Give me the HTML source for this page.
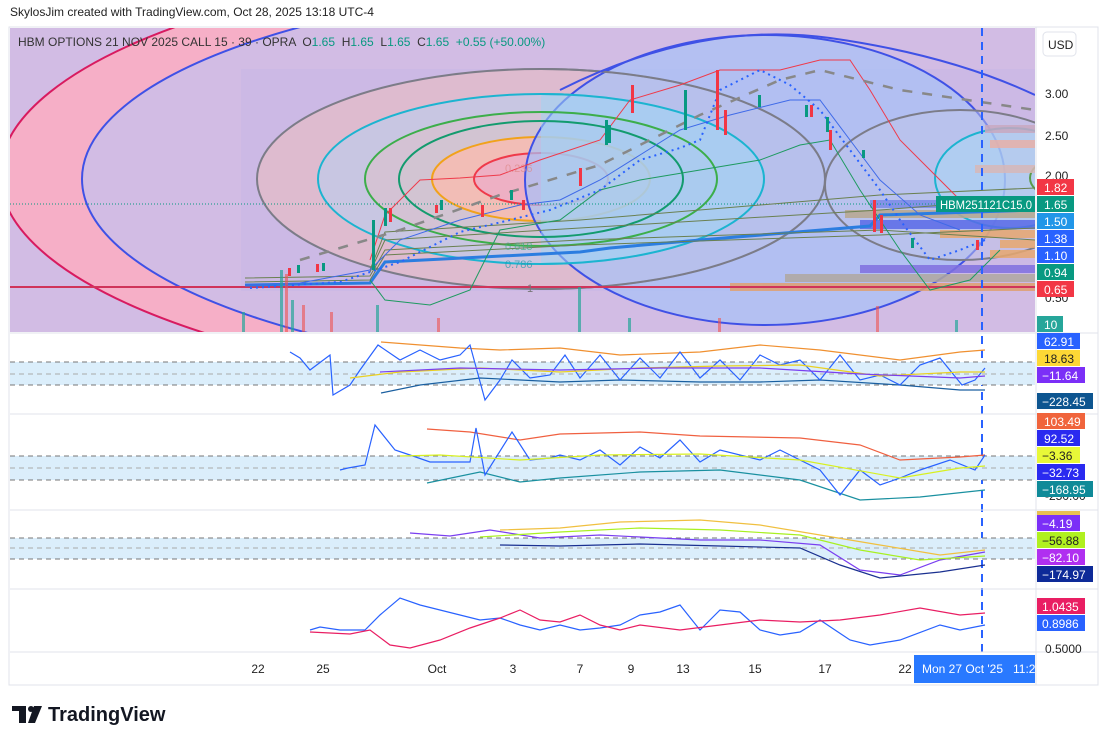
<!DOCTYPE html>
<html><head><meta charset="utf-8"><style>
body{margin:0;background:#fff;width:1108px;height:743px;overflow:hidden;font-family:"Liberation Sans",sans-serif;}
.t{position:absolute;}
</style></head><body>
<div class="t" style="left:10px;top:5px;font-size:12px;color:#222">SkylosJim created with TradingView.com, Oct 28, 2025 13:18 UTC-4</div>
<svg width="1108" height="743" style="position:absolute;left:0;top:0" font-family="Liberation Sans, sans-serif">
<defs><clipPath id="mc"><rect x="10" y="28" width="1025" height="304"/></clipPath></defs>
<rect x="9" y="27" width="1089" height="658" fill="#fff" stroke="#e0e3eb"/>
<g clip-path="url(#mc)">
<rect x="10" y="28" width="1025" height="304" fill="#d2bce4"/>
<ellipse cx="710" cy="175" rx="710" ry="225" fill="#f6afc7" stroke="#d81b60" stroke-width="2"/>
<ellipse cx="682" cy="179" rx="600" ry="197" fill="#d2bce4" stroke="#3f51e6" stroke-width="2"/>
<rect x="241" y="69" width="800" height="222" fill="#c6b6e6" opacity="0.5"/>
<ellipse cx="541" cy="179" rx="284" ry="110" fill="#e2bcc9" fill-opacity="0.8" stroke="#7c7c88" stroke-width="2"/>
<ellipse cx="541" cy="179" rx="223" ry="85" fill="#c8c6e2" stroke="#1cb4d0" stroke-width="2"/>
<ellipse cx="541" cy="179" rx="176" ry="67" fill="#d4c2d4" stroke="#3cae4a" stroke-width="2"/>
<ellipse cx="541" cy="179" rx="142" ry="58" fill="#d2c4d2" stroke="#139b6e" stroke-width="2"/>
<ellipse cx="541" cy="179" rx="109" ry="42" fill="#f2bdb6" stroke="#f1a21b" stroke-width="2"/>
<ellipse cx="541" cy="179" rx="67" ry="26" fill="#eeb0c4" stroke="#ef3a4a" stroke-width="2"/>
<ellipse cx="765" cy="180" rx="240" ry="145" fill="#a6c2f8" fill-opacity="0.7" stroke="#3f51e6" stroke-width="2"/>
<path d="M541 69 A284 110 0 0 1 825 179 A284 110 0 0 1 541 289" fill="none" stroke="#7c7c88" stroke-width="2"/>
<path d="M541 94 A223 85 0 0 1 764 179 A223 85 0 0 1 541 264" fill="#a3d4f0" fill-opacity="0.55" stroke="#1cb4d0" stroke-width="2"/>
<path d="M541 112 A176 67 0 0 1 717 179 A176 67 0 0 1 541 246" fill="none" stroke="#3cae4a" stroke-width="2"/>
<path d="M541 121 A142 58 0 0 1 683 179 A142 58 0 0 1 541 237" fill="none" stroke="#139b6e" stroke-width="2"/>
<ellipse cx="960" cy="185" rx="135" ry="75" fill="#c0c6e8" fill-opacity="0.5" stroke="#7c7c88" stroke-width="2"/>
<ellipse cx="1010" cy="178" rx="75" ry="50" fill="#aad4f4" fill-opacity="0.6" stroke="#1cb4d0" stroke-width="2"/>
<ellipse cx="1070" cy="178" rx="40" ry="22" fill="none" stroke="#5a9c4a" stroke-width="2"/>
<path d="M560 90 Q700 20 830 38 M830 38 Q950 55 1035 95" fill="none" stroke="#3f51e6" stroke-width="2"/>
<g opacity="0.85">
<rect x="985" y="125" width="50" height="8" fill="#c8a8c0"/><rect x="990" y="140" width="45" height="8" fill="#e8b0a8"/><rect x="975" y="165" width="60" height="8" fill="#d8b8b8"/>
<rect x="870" y="200" width="165" height="8" fill="#7a8ae8"/><rect x="845" y="210" width="190" height="8" fill="#b8a890"/><rect x="860" y="220" width="175" height="9" fill="#5a6ae8"/>
<rect x="940" y="230" width="95" height="8" fill="#e8a870"/><rect x="1000" y="240" width="35" height="8" fill="#e8a870"/><rect x="990" y="250" width="45" height="8" fill="#e8a870"/>
<rect x="860" y="265" width="175" height="8" fill="#8070e0"/><rect x="785" y="274" width="250" height="8" fill="#b0a8a0"/><rect x="730" y="283" width="305" height="8" fill="#e0a070"/>
</g>
<line x1="10" y1="287" x2="1035" y2="287" stroke="#d0345a" stroke-width="2"/>
<line x1="10" y1="204" x2="1035" y2="204" stroke="#089981" stroke-dasharray="1 2"/>
<path d="M245 285 L370 283 L385 262 L580 252 L610 248 L700 240 L870 226 L880 215 L1035 210" fill="none" stroke="#2b7de0" stroke-width="3"/>
<path d="M245 282 L370 280 L385 255 L580 245 L880 235 L1035 228 M245 278 L370 276 L385 250 L580 240 L880 230 L1035 240 M370 272 L385 240 L580 228 L880 210 L1035 198 M370 270 L385 232 L580 220 L880 195 L1035 188" fill="none" stroke="#6a8050" stroke-width="1"/>
<path d="M370 280 L385 300 L430 305 L470 290 L500 230 L560 220 L600 190 L640 180 L700 170 L760 160 L800 145 L830 140 L860 190 L900 250 L930 290 L970 280 L1000 250" fill="none" stroke="#1e9a60" stroke-width="1"/>
<path d="M370 260 L385 215 L420 180 L460 178 L500 175 L540 160 L600 140 L630 100 L680 85 L720 70 L780 70 L820 60 L850 60 L870 90 L900 140 L940 180 L960 200 L985 200" fill="none" stroke="#ef3a4a" stroke-width="1"/>
<path d="M245 285 L300 283 L370 270 L400 240 L460 220 L520 205 L560 200 L600 180 L640 155 L680 130 L730 115 L790 100 L820 100 L850 140 L880 180 L920 215 L960 230" fill="none" stroke="#3f6ae8" stroke-width="1"/>
<path d="M300 260 L400 230 L500 195 L600 165 L700 115 L780 80 L820 70 L900 90 L1035 110" fill="none" stroke="#888" stroke-width="2.5" stroke-dasharray="10 10"/>
<path d="M250 288 L340 282 L400 262 L460 232 L510 220 L550 210 L600 190 L640 160 L680 148 L700 140 L720 90 L760 70 L790 85 L820 110 L850 150 L880 190 L900 220 L930 260 L960 250 L985 240" fill="none" stroke="#2962ff" stroke-width="2" stroke-dasharray="2 4"/>
<g fill="#089981">
<rect x="372" y="220" width="3" height="50"/><rect x="384" y="208" width="3" height="18"/><rect x="440" y="200" width="3" height="10"/><rect x="510" y="190" width="3" height="10"/>
<rect x="605" y="120" width="3" height="25"/><rect x="608" y="125" width="3" height="18"/><rect x="684" y="90" width="3" height="40"/><rect x="758" y="95" width="3" height="12"/>
<rect x="805" y="105" width="3" height="12"/><rect x="826" y="117" width="3" height="15"/><rect x="862" y="150" width="3" height="8"/><rect x="911" y="238" width="3" height="10"/><rect x="297" y="265" width="3" height="8"/><rect x="322" y="263" width="3" height="8"/>
</g>
<g fill="#f23645">
<rect x="389" y="208" width="3" height="14"/><rect x="435" y="205" width="3" height="8"/><rect x="481" y="205" width="3" height="12"/><rect x="522" y="200" width="3" height="10"/>
<rect x="579" y="168" width="3" height="18"/><rect x="631" y="85" width="3" height="28"/><rect x="716" y="70" width="3" height="60"/><rect x="724" y="110" width="3" height="25"/>
<rect x="810" y="105" width="3" height="12"/><rect x="829" y="130" width="3" height="20"/><rect x="873" y="200" width="3" height="32"/><rect x="880" y="215" width="3" height="18"/><rect x="976" y="240" width="3" height="10"/><rect x="288" y="268" width="3" height="8"/><rect x="316" y="264" width="3" height="8"/>
</g>
<g fill="#26a69a" opacity="0.7"><rect x="242" y="312" width="3" height="20"/><rect x="280" y="270" width="3" height="62"/><rect x="291" y="300" width="3" height="32"/><rect x="376" y="305" width="3" height="27"/><rect x="578" y="287" width="3" height="45"/><rect x="628" y="318" width="3" height="14"/><rect x="955" y="320" width="3" height="12"/></g>
<g fill="#ef5350" opacity="0.6"><rect x="285" y="274" width="3" height="58"/><rect x="302" y="305" width="3" height="27"/><rect x="330" y="312" width="3" height="20"/><rect x="437" y="318" width="3" height="14"/><rect x="718" y="318" width="3" height="14"/><rect x="876" y="306" width="3" height="26"/></g>
<text x="505" y="172" font-size="11" fill="#d88" opacity="0.7">0.236</text>
<text x="505" y="250" font-size="11" fill="#4a8" opacity="0.7">0.618</text><text x="505" y="268" font-size="11" fill="#29a" opacity="0.7">0.786</text>
<text x="527" y="292" font-size="11" fill="#777">1</text>
</g>
<line x1="982" y1="28" x2="982" y2="684" stroke="#2962ff" stroke-width="2" stroke-dasharray="8 6"/>
<text x="18" y="46" font-size="12" fill="#333" xml:space="preserve">HBM OPTIONS 21 NOV 2025 CALL 15 · 39 · OPRA  O<tspan fill="#089981">1.65</tspan>  H<tspan fill="#089981">1.65</tspan>  L<tspan fill="#089981">1.65</tspan>  C<tspan fill="#089981">1.65  +0.55 (+50.00%)</tspan></text>
<g stroke="#e0e3eb"><line x1="10" y1="333" x2="1098" y2="333"/><line x1="10" y1="414" x2="1098" y2="414"/><line x1="10" y1="510" x2="1098" y2="510"/><line x1="10" y1="589" x2="1098" y2="589"/><line x1="10" y1="652" x2="1098" y2="652"/><line x1="1036" y1="27" x2="1036" y2="685"/></g>
<rect x="10" y="362" width="1025" height="23" fill="#dbeefb"/><rect x="10" y="456" width="1025" height="24" fill="#dbeefb"/><rect x="10" y="538" width="1025" height="21" fill="#dbeefb"/>
<g stroke="#777" stroke-dasharray="5 4"><line x1="10" y1="362" x2="1035" y2="362"/><line x1="10" y1="374" x2="1035" y2="374" stroke="#aaa"/><line x1="10" y1="385" x2="1035" y2="385"/>
<line x1="10" y1="456" x2="1035" y2="456"/><line x1="10" y1="468" x2="1035" y2="468" stroke="#aaa"/><line x1="10" y1="480" x2="1035" y2="480"/>
<line x1="10" y1="538" x2="1035" y2="538"/><line x1="10" y1="548" x2="1035" y2="548" stroke="#aaa"/><line x1="10" y1="559" x2="1035" y2="559"/></g>
<g fill="none" stroke-width="1.2">
<path d="M381 342 L460 348 L500 350 L560 348 L620 355 L700 352 L760 345 L820 350 L900 360 L960 352 L985 350" stroke="#f09030"/>
<path d="M381 393 L420 385 L480 378 L560 382 L620 380 L700 382 L760 382 L820 380 L900 385 L960 390 L985 390" stroke="#1a5fa0"/>
<path d="M290 352 L300 358 L310 370 L330 355 L333 395 L350 385 L360 370 L378 345 L400 360 L420 350 L440 360 L460 355 L470 345 L485 400 L500 380 L512 360 L530 378 L550 375 L565 355 L580 378 L600 355 L620 380 L640 358 L660 378 L680 352 L700 378 L720 360 L740 380 L760 355 L780 365 L800 360 L820 380 L840 355 L860 380 L880 375 L900 385 L920 365 L940 358 L962 385 L975 380 L985 368" stroke="#2962ff"/>
<path d="M350 378 L400 372 L480 368 L560 372 L640 368 L720 366 L800 365 L880 376 L960 372 L985 372" stroke="#ead020"/>
<path d="M380 372 L460 368 L560 370 L660 368 L760 368 L860 374 L960 378 L985 376" stroke="#7a3ff0"/>
<path d="M427 429 L470 432 L520 440 L560 434 L640 432 L700 436 L800 438 L860 445 L900 460 L960 457 L985 455" stroke="#f06040"/>
<path d="M427 483 L480 472 L520 482 L560 478 L640 472 L720 470 L800 480 L860 500 L920 497 L985 490" stroke="#1a90a0"/>
<path d="M340 470 L348 468 L365 465 L375 425 L395 450 L410 455 L430 462 L470 462 L476 428 L485 475 L512 432 L530 460 L550 458 L560 455 L580 460 L600 450 L620 465 L640 447 L660 458 L680 440 L700 462 L720 450 L760 460 L780 450 L820 470 L840 495 L860 470 L880 485 L900 478 L920 470 L950 460 L975 470 L985 455" stroke="#2962ff"/>
<path d="M400 456 L440 455 L520 460 L600 455 L700 454 L800 460 L900 478 L960 468 L985 466" stroke="#d8f020"/>
<path d="M410 533 L450 536 L490 530 L540 538 L600 535 L660 538 L700 540 L760 540 L820 545 L860 570 L900 575 L940 560 L985 552" stroke="#7a3ff0"/>
<path d="M480 537 L560 532 L640 528 L720 530 L800 535 L860 550 L920 560 L985 556" stroke="#a8f020"/>
<path d="M500 530 L560 528 L620 522 L700 520 L760 525 L820 535 L880 545 L940 555 L985 550" stroke="#f0c040"/>
<path d="M500 545 L560 546 L640 544 L720 546 L800 548 L840 565 L880 578 L940 572 L985 565" stroke="#1a3090"/>
<path d="M310 630 L320 627 L340 630 L365 630 L380 615 L400 598 L420 605 L440 610 L460 615 L480 620 L500 618 L520 625 L540 630 L560 625 L580 630 L600 628 L620 625 L640 615 L660 612 L680 605 L700 630 L720 610 L740 612 L760 630 L780 635 L800 632 L820 620 L850 640 L870 645 L900 640 L940 625 L960 630 L985 625" stroke="#2962ff"/>
<path d="M310 632 L350 634 L370 630 L390 645 L410 648 L440 640 L470 628 L500 618 L520 610 L540 620 L560 622 L580 615 L600 625 L620 630 L640 625 L680 630 L720 625 L760 620 L800 622 L840 620 L880 615 L920 608 L960 615 L985 613" stroke="#e91e63"/>
</g>
<rect x="1043" y="32" width="33" height="24" rx="4" fill="#fff" stroke="#e0e3eb"/>
<text x="1048" y="49" font-size="12" fill="#222">USD</text>
<g font-size="12" fill="#222"><text x="1045" y="98">3.00</text><text x="1045" y="140">2.50</text><text x="1045" y="180">2.00</text><text x="1045" y="302">0.50</text><text x="1045" y="500">-250.00</text><text x="1045" y="653">0.5000</text></g>
<g font-size="12" fill="#fff">
<rect x="1037" y="179" width="37" height="16" fill="#f23645"/><text x="1044" y="192">1.82</text>
<rect x="936" y="196" width="99" height="16" fill="#089981"/><text x="940" y="209" font-size="11.5" textLength="92" lengthAdjust="spacingAndGlyphs">HBM251121C15.0</text>
<rect x="1037" y="196" width="37" height="16" fill="#089981"/><text x="1044" y="209">1.65</text>
<rect x="1037" y="213" width="37" height="16" fill="#2196e8"/><text x="1044" y="226">1.50</text>
<rect x="1037" y="230" width="37" height="16" fill="#2962ff"/><text x="1044" y="243">1.38</text>
<rect x="1037" y="247" width="37" height="16" fill="#2962ff"/><text x="1044" y="260">1.10</text>
<rect x="1037" y="264" width="37" height="16" fill="#089981"/><text x="1044" y="277">0.94</text>
<rect x="1037" y="281" width="37" height="16" fill="#f23645"/><text x="1044" y="294">0.65</text>
<rect x="1037" y="316" width="26" height="16" fill="#26a69a"/><text x="1044" y="329">10</text>
<rect x="1037" y="333" width="43" height="16" fill="#2962ff"/><text x="1044" y="346">62.91</text>
<rect x="1037" y="350" width="43" height="16" fill="#fdd835"/><text x="1044" y="363" fill="#222">18.63</text>
<rect x="1037" y="367" width="48" height="16" fill="#7b2ff7"/><text x="1042" y="380">−11.64</text>
<rect x="1037" y="393" width="56" height="16" fill="#0d5590"/><text x="1042" y="406">−228.45</text>
<rect x="1037" y="413" width="48" height="16" fill="#f0643c"/><text x="1044" y="426">103.49</text>
<rect x="1037" y="430" width="43" height="16" fill="#2a2af0"/><text x="1044" y="443">92.52</text>
<rect x="1037" y="447" width="43" height="16" fill="#e8f838"/><text x="1042" y="460" fill="#222">−3.36</text>
<rect x="1037" y="464" width="48" height="16" fill="#2a2af0"/><text x="1042" y="477">−32.73</text>
<rect x="1037" y="481" width="56" height="16" fill="#0f8a98"/><text x="1042" y="494">−168.95</text>
<rect x="1037" y="511" width="43" height="4" fill="#e8c050"/>
<rect x="1037" y="515" width="43" height="16" fill="#7b2ff7"/><text x="1042" y="528">−4.19</text>
<rect x="1037" y="532" width="48" height="16" fill="#b0f020"/><text x="1042" y="545" fill="#222">−56.88</text>
<rect x="1037" y="549" width="48" height="16" fill="#b02ff0"/><text x="1042" y="562">−82.10</text>
<rect x="1037" y="566" width="56" height="16" fill="#0d2a98"/><text x="1042" y="579">−174.97</text>
<rect x="1037" y="598" width="48" height="16" fill="#e91e63"/><text x="1042" y="611">1.0435</text>
<rect x="1037" y="615" width="48" height="16" fill="#2962ff"/><text x="1042" y="628">0.8986</text>
</g>
<g font-size="12" fill="#222" text-anchor="middle"><text x="258" y="673">22</text><text x="323" y="673">25</text><text x="437" y="673">Oct</text><text x="513" y="673">3</text><text x="580" y="673">7</text><text x="631" y="673">9</text><text x="683" y="673">13</text><text x="755" y="673">15</text><text x="825" y="673">17</text><text x="905" y="673">22</text></g>
<rect x="914" y="655" width="121" height="28" fill="#2979ff"/>
<text x="922" y="673" font-size="12" fill="#fff" xml:space="preserve">Mon 27 Oct '25   11:2</text>
<g fill="#131722"><rect x="12" y="706" width="14" height="5"/><rect x="19" y="706" width="7" height="17"/><circle cx="31" cy="709" r="3"/><path d="M34 706 L42 706 L35 723 L28 723 Z"/></g>
<text x="48" y="721" font-size="20" font-weight="bold" fill="#131722">TradingView</text>
</svg>
</body></html>
